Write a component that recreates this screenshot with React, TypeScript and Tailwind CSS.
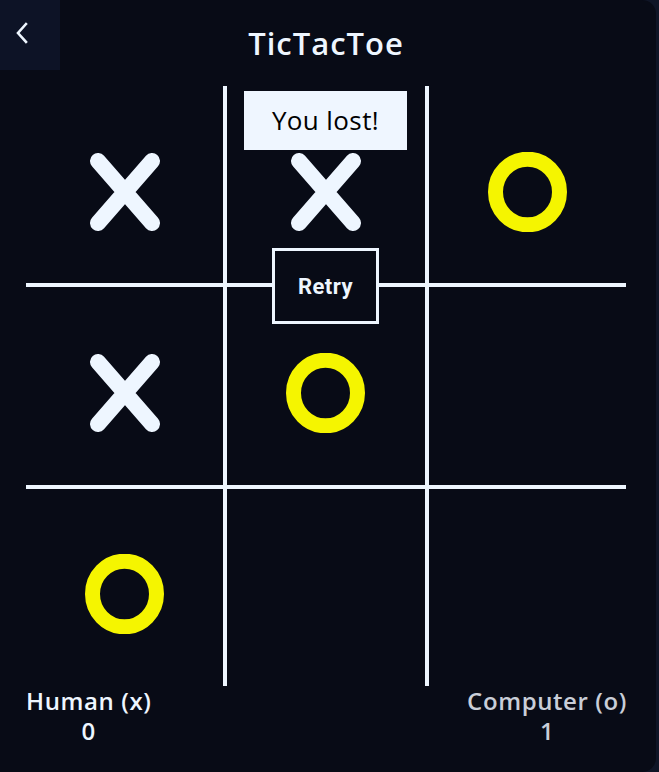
import React from 'react'

type Mark = 'x' | 'o' | ''

const board: Mark[][] = [
  ['x', 'x', 'o'],
  ['x', 'o', ''],
  ['o', '', ''],
]

function XMark() {
  return (
    <svg width="70" height="78" viewBox="0 0 70 78" fill="none">
      <path d="M8 8 L62 70 M62 8 L8 70" stroke="#eef6ff" strokeWidth="16" strokeLinecap="round" />
    </svg>
  )
}

function OMark() {
  return (
    <svg width="79" height="80" viewBox="0 0 79 80" fill="none">
      <ellipse cx="39.5" cy="40" rx="32" ry="32.8" stroke="#f5f500" strokeWidth="15" />
    </svg>
  )
}

function Cell({ mark }: { mark: Mark }) {
  return (
    <div className="bg-[#080b16] flex items-center justify-center pt-[14px]">
      {mark === 'x' && <XMark />}
      {mark === 'o' && <OMark />}
    </div>
  )
}

export default function App() {
  return (
    <div className="w-[659px] h-[772px] bg-[#0f1526]">
      <div className="relative w-[656px] h-[772px] bg-[#080b16] rounded-r-[14px] text-[#eef6ff] font-['Open_Sans','Noto_Sans',sans-serif]">
        <button className="absolute top-0 left-0 w-[60px] h-[70px] bg-[#0d1326] flex items-start">
          <svg className="ml-[15px] mt-[22px]" width="14" height="22" viewBox="0 0 14 22" fill="none">
            <path d="M11 2 L3 11 L11 20" stroke="#eef6ff" strokeWidth="2.6" strokeLinecap="square" />
          </svg>
        </button>

        <h1 className="h-[86px] pt-[23px] text-center text-[31px] leading-[40px] font-semibold tracking-[1px] w-[652px]">
          TicTacToe
        </h1>

        <div className="relative ml-[26px] w-[600px] h-[600px] grid grid-cols-3 grid-rows-3 gap-[4px] bg-[#eef6ff]">
          {board.flat().map((m, i) => (
            <Cell key={i} mark={m} />
          ))}

          <div className="absolute left-[218px] top-[5px] w-[163px] h-[59px] bg-[#eff6ff] text-black flex items-center justify-center text-[26px] tracking-[0.4px]">
            You lost!
          </div>

          <button className="absolute left-[246px] top-[162px] w-[107px] h-[76px] border-[3px] border-[#eef6ff] bg-[#080b16] flex items-center justify-center font-['Roboto',sans-serif] font-bold text-[22px] tracking-[0.5px] text-[#eef6ff]">
            Retry
          </button>
        </div>

        <div className="flex justify-between pl-[26px] pr-[29px] text-[24px] leading-[30px] font-semibold tracking-[0.6px]">
          <div className="flex flex-col items-center">
            <span>Human (x)</span>
            <span>0</span>
          </div>
          <div className="flex flex-col items-center text-[#c9ced8]">
            <span>Computer (o)</span>
            <span>1</span>
          </div>
        </div>
      </div>
    </div>
  )
}
